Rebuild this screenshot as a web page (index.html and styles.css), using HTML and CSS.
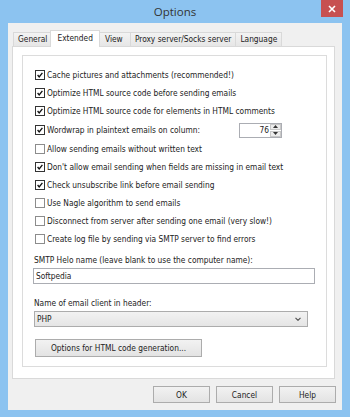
FILE: index.html
```html
<!DOCTYPE html>
<html lang="en">
<head>
  <meta charset="UTF-8" />
  <title>Options</title>
  <link rel="stylesheet" href="styles.css">
</head>
<body>
  <div class="window">
    <div class="titlebar">
      <div class="title">Options</div>
      <div class="close">
        <svg width="8" height="8" viewBox="0 0 8 8"><path d="M1 1 L7 7 M7 1 L1 7" stroke="#fff" stroke-width="1.6" /></svg>
      </div>
    </div>

    <div class="client">
      <div class="tabs">
        <div class="tab">General</div>
        <div class="tab active">Extended</div>
        <div class="tab">View</div>
        <div class="tab">Proxy server/Socks server</div>
        <div class="tab">Language</div>
      </div>

      <div class="panel">
        <div class="group">
          <div class="check"><span class="box on"><svg viewBox="0 0 10 10"><path d="M2 5 L4 7.3 L8 2.4" /></svg></span>Cache pictures and attachments (recommended!)</div>
          <div class="check"><span class="box on"><svg viewBox="0 0 10 10"><path d="M2 5 L4 7.3 L8 2.4" /></svg></span>Optimize HTML source code before sending emails</div>
          <div class="check"><span class="box on"><svg viewBox="0 0 10 10"><path d="M2 5 L4 7.3 L8 2.4" /></svg></span>Optimize HTML source code for elements in HTML comments</div>
          <div class="check spinrow">
            <span class="box on"><svg viewBox="0 0 10 10"><path d="M2 5 L4 7.3 L8 2.4" /></svg></span>Wordwrap in plaintext emails on column:
            <div class="spin">
              <span class="spin-value">76</span>
              <div class="spin-btns">
                <div class="spin-btn"><svg width="5" height="3" viewBox="0 0 5 3"><path d="M0 3 L2.5 0 L5 3 Z" /></svg></div>
                <div class="spin-btn"><svg width="5" height="3" viewBox="0 0 5 3"><path d="M0 0 L2.5 3 L5 0 Z" /></svg></div>
              </div>
            </div>
          </div>
          <div class="check"><span class="box"></span>Allow sending emails without written text</div>
          <div class="check"><span class="box on"><svg viewBox="0 0 10 10"><path d="M2 5 L4 7.3 L8 2.4" /></svg></span>Don't allow email sending when fields are missing in email text</div>
          <div class="check"><span class="box on"><svg viewBox="0 0 10 10"><path d="M2 5 L4 7.3 L8 2.4" /></svg></span>Check unsubscribe link before email sending</div>
          <div class="check"><span class="box"></span>Use Nagle algorithm to send emails</div>
          <div class="check"><span class="box"></span>Disconnect from server after sending one email (very slow!)</div>
          <div class="check"><span class="box"></span>Create log file by sending via SMTP server to find errors</div>

          <div class="field-label first">SMTP Helo name (leave blank to use the computer name):</div>
          <div class="textbox">Softpedia</div>

          <div class="field-label">Name of email client in header:</div>
          <div class="select">
            <span>PHP</span>
            <svg width="6" height="4" viewBox="0 0 6 4"><path d="M0.5 0.8 L3 3.3 L5.5 0.8" /></svg>
          </div>

          <div class="button wide">Options for HTML code generation...</div>
        </div>
      </div>

      <div class="actions">
        <div class="button">OK</div>
        <div class="button">Cancel</div>
        <div class="button">Help</div>
      </div>
    </div>
  </div>
</body>
</html>
```

FILE: styles.css
```css
html, body {
  margin: 0;
  padding: 0;
}

body {
  font-family: "DejaVu Sans Condensed", "DejaVu Sans", sans-serif;
  font-stretch: condensed;
  font-size: 8.3px;
  color: #222;
}

.window {
  width: 350px;
  height: 417px;
  box-sizing: border-box;
  padding: 0 8px 7px;
  background: #8cc3f0;
  display: flex;
  flex-direction: column;
}

.titlebar {
  height: 23px;
  display: grid;
  grid-template-columns: 1fr auto 1fr;
}

.title {
  grid-column: 2;
  font-family: "Open Sans", sans-serif;
  font-stretch: normal;
  font-size: 11.5px;
  line-height: 23px;
  color: #333;
}

.close {
  grid-column: 3;
  justify-self: end;
  align-self: start;
  width: 22px;
  height: 17px;
  margin-right: -1px;
  background: #c75050;
  display: flex;
  align-items: center;
  justify-content: center;
}

.client {
  flex: 1;
  background: #f0f0f0;
  padding: 7px 7px 0 4px;
  display: flex;
  flex-direction: column;
}

/* tabs */
.tabs {
  display: flex;
  align-items: flex-end;
  height: 16px;
  padding-left: 2px;
}

.tab {
  height: 13px;
  min-width: 24px;
  line-height: 13px;
  padding: 0 4px;
  border: 1px solid #d9d9d9;
  border-bottom: none;
  margin-left: -1px;
  background: linear-gradient(#f3f3f3, #e6e6e6);
  text-align: center;
  white-space: nowrap;
}

.tab.active {
  position: relative;
  z-index: 1;
  height: 16px;
  line-height: 14px;
  margin: 0 -2px -1px -2px;
  padding: 0 6px;
  background: #fff;
}

.panel {
  height: 333px;
  box-sizing: border-box;
  border: 1px solid #d9d9d9;
  background: #fff;
  padding: 8px 0 0 9px;
}

.group {
  width: 305px;
  height: 312px;
  box-sizing: border-box;
  border: 1px solid #dcdcdc;
  padding: 10px 0 0 11px;
}

/* checkboxes */
.check {
  display: flex;
  align-items: center;
  height: 18px;
  padding-left: 1px;
  white-space: nowrap;
}

.box {
  width: 10px;
  height: 10px;
  box-sizing: border-box;
  border: 1px solid #8c8c8c;
  background: #fff;
  margin-right: 2px;
  flex: none;
}

.box.on {
  border-color: #333;
}

.box svg {
  display: block;
  width: 8px;
  height: 8px;
}

.box svg path {
  fill: none;
  stroke: #111;
  stroke-width: 1.7;
}

.spinrow {
  height: 20px;
  width: 247px;
}

.spin {
  margin-left: auto;
  width: 43px;
  height: 15px;
  box-sizing: border-box;
  border: 1px solid #abadb3;
  display: flex;
  align-items: center;
}

.spin-value {
  flex: 1;
  text-align: right;
  padding-right: 1px;
}

.spin-btns {
  width: 11px;
  height: 13px;
  display: flex;
  flex-direction: column;
  gap: 1px;
}

.spin-btn {
  flex: 1;
  background: #ececec;
  border: 1px solid #c8c8c8;
  display: flex;
  align-items: center;
  justify-content: center;
}

.spin-btn svg path {
  fill: #333;
}

/* fields */
.field-label {
  margin-top: 12px;
  height: 14px;
  line-height: 14px;
}

.field-label.first {
  margin-top: 5px;
}

.textbox {
  width: 282px;
  height: 16px;
  box-sizing: border-box;
  margin: 1px 0 0 -1px;
  border: 1px solid #abadb3;
  padding-left: 2px;
  line-height: 14px;
}

.select {
  width: 274px;
  height: 16px;
  box-sizing: border-box;
  margin-top: 1px;
  border: 1px solid #acacac;
  background: linear-gradient(#f2f2f2, #e5e5e5);
  padding: 0 6px 0 2px;
  display: flex;
  align-items: center;
  justify-content: space-between;
}

.select svg path {
  fill: none;
  stroke: #555;
  stroke-width: 1.2;
}

.button {
  height: 17px;
  box-sizing: border-box;
  border: 1px solid #acacac;
  background: linear-gradient(#f2f2f2, #e3e3e3);
  display: flex;
  align-items: center;
  justify-content: center;
  width: 57px;
}

.button.wide {
  width: 167px;
  height: 18px;
  margin: 12px 0 0 1px;
}

.actions {
  display: flex;
  justify-content: flex-end;
  gap: 6px;
  padding-top: 7px;
  margin-right: -1px;
}
```
